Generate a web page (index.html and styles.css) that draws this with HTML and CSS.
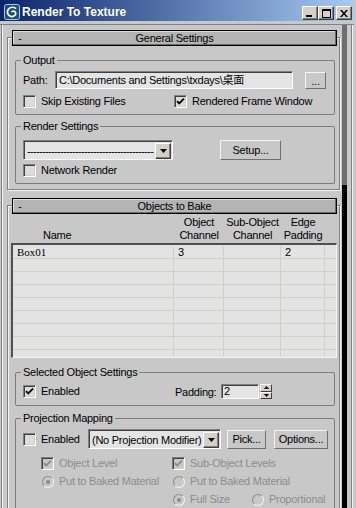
FILE: index.html
```html
<!DOCTYPE html>
<html>
  <head>
    <meta http-equiv="Content-Type" content="text/html; charset=UTF-8" />
    <title>Render To Texture</title>
    <link rel="stylesheet" href="styles.css">
  </head>
  <body>
    <div class="window">
      <div class="titlebar">
        <svg class="app-icon" width="16" height="16" viewBox="0 0 16 16">
          <rect x="0.5" y="0.5" width="15" height="15" rx="2" fill="#1d4f7c" stroke="#a9c6e2" />
          <path d="M12 4.6C10.4 2.8 6.2 2.6 4.3 5.2 2.4 7.8 3.6 11.6 6.8 12.4 9.6 13.1 12.2 11 11.6 8.7 11.1 6.8 8.4 6.6 7.5 8.2" fill="none" stroke="#fff" stroke-width="1.7" />
        </svg>
        <span class="title">Render To Texture</span>
        <div class="caption-buttons">
          <span class="cap-btn"><svg width="6" height="2"><rect width="6" height="2" /></svg></span>
          <span class="cap-btn"><svg width="9" height="9"><path d="M0.5 1.5h8v7h-8z" fill="none" stroke="#000" /><rect width="9" height="2" /></svg></span>
          <span class="cap-btn close"><svg width="8" height="7"><path d="M0 0h2l2 2.4 2-2.4h2l-3 3.5 3 3.5h-2l-2-2.4-2 2.4h-2l3-3.5z" /></svg></span>
        </div>
      </div>

      <div class="client">
        <div class="panel">
          <!-- General Settings -->
          <div class="rollout">
            <div class="rollout-head">
              <span class="sign">-</span>
              <span class="rollout-title">General Settings</span>
              <span></span>
            </div>

            <fieldset class="group">
              <legend>Output</legend>
              <div class="group-body">
                <div class="row path-row">
                  <span class="path-label">Path:</span>
                  <div class="field path-field">C:\Documents and Settings\txdays\桌面</div>
                  <span class="btn browse">...</span>
                </div>
                <div class="row check-row">
                  <span class="check col-left"><span class="cb"></span>Skip Existing Files</span>
                  <span class="check"><span class="cb"><svg width="9" height="9"><path d="M1 4.2l2.2 2.2 4.8-4.8" /></svg></span>Rendered Frame Window</span>
                </div>
              </div>
            </fieldset>

            <fieldset class="group render-group">
              <legend>Render Settings</legend>
              <div class="group-body">
                <div class="row combo-row">
                  <div class="combo preset">
                    <span class="combo-text dashes">------------------------------------------</span>
                    <span class="combo-arrow"><svg width="7" height="4"><path d="M0 0h7l-3.5 4z" /></svg></span>
                  </div>
                  <span class="btn setup">Setup...</span>
                </div>
                <div class="row check-row network">
                  <span class="check"><span class="cb"></span>Network Render</span>
                </div>
              </div>
            </fieldset>
          </div>

          <!-- Objects to Bake -->
          <div class="rollout bake">
            <div class="rollout-head">
              <span class="sign">-</span>
              <span class="rollout-title">Objects to Bake</span>
              <span></span>
            </div>

            <div class="col-heads">
              <span class="col-name">Name</span>
              <span>Object<br>Channel</span>
              <span>Sub-Object<br>Channel</span>
              <span>Edge<br>Padding</span>
              <span></span>
            </div>
            <div class="list">
              <div class="list-row"><span class="name-cell">Box01</span><span>3</span><span></span><span>2</span><span></span></div>
              <div class="list-row"><span></span><span></span><span></span><span></span><span></span></div>
              <div class="list-row"><span></span><span></span><span></span><span></span><span></span></div>
              <div class="list-row"><span></span><span></span><span></span><span></span><span></span></div>
              <div class="list-row"><span></span><span></span><span></span><span></span><span></span></div>
              <div class="list-row"><span></span><span></span><span></span><span></span><span></span></div>
              <div class="list-row"><span></span><span></span><span></span><span></span><span></span></div>
              <div class="list-row"><span></span><span></span><span></span><span></span><span></span></div>
              <div class="list-row"><span></span><span></span><span></span><span></span><span></span></div>
            </div>

            <fieldset class="group selected-group">
              <legend>Selected Object Settings</legend>
              <div class="group-body">
                <div class="row spin-row">
                  <span class="check col-left"><span class="cb"><svg width="9" height="9"><path d="M1 4.2l2.2 2.2 4.8-4.8" /></svg></span>Enabled</span>
                  <span class="spin-label">Padding:</span>
                  <div class="field spin-field">2</div>
                  <div class="spinner">
                    <span class="spin-btn"><svg width="5" height="3"><path d="M2.5 0l2.5 3h-5z" /></svg></span>
                    <span class="spin-btn"><svg width="5" height="3"><path d="M0 0h5l-2.5 3z" /></svg></span>
                  </div>
                </div>
              </div>
            </fieldset>

            <fieldset class="group projection-group">
              <legend>Projection Mapping</legend>
              <div class="group-body">
                <div class="row proj-row">
                  <span class="check proj-enabled"><span class="cb"></span>Enabled</span>
                  <div class="combo modifier">
                    <span class="combo-text">(No Projection Modifier)</span>
                    <span class="combo-arrow"><svg width="7" height="4"><path d="M0 0h7l-3.5 4z" /></svg></span>
                  </div>
                  <span class="btn pick">Pick...</span>
                  <span class="btn options">Options...</span>
                </div>
                <div class="row sub-row disabled">
                  <span class="check sub-left"><span class="cb off"><svg width="9" height="9"><path d="M1 4.2l2.2 2.2 4.8-4.8" /></svg></span>Object Level</span>
                  <span class="check"><span class="cb off"><svg width="9" height="9"><path d="M1 4.2l2.2 2.2 4.8-4.8" /></svg></span>Sub-Object Levels</span>
                </div>
                <div class="row sub-row disabled">
                  <span class="check sub-left"><span class="radio on"></span>Put to Baked Material</span>
                  <span class="check"><span class="radio"></span>Put to Baked Material</span>
                </div>
                <div class="row sub-row disabled">
                  <span class="sub-left"></span>
                  <span class="check full-size"><span class="radio on"></span>Full Size</span>
                  <span class="check"><span class="radio"></span>Proportional</span>
                </div>
              </div>
            </fieldset>
          </div>
        </div>

        <div class="scrollbar">
          <div class="scroll-track"></div>
          <div class="scroll-thumb"></div>
        </div>
        <div class="edge"></div>
      </div>
    </div>
  </body>
</html>
```

FILE: styles.css
```css
body {
  margin: 0;
  background-color: #c8c8c8;
  font-family: "Liberation Sans", "Noto Sans CJK SC", sans-serif;
  font-size: 11px;
  letter-spacing: -0.25px;
  color: #000;
  overflow: hidden;
}
.window {
  width: 354px;
  height: 508px;
  overflow: hidden;
}

/* title bar */
.titlebar {
  height: 21px;
  box-sizing: border-box;
  padding: 4px 2px 0 4px;
  display: flex;
  align-items: flex-start;
  background: linear-gradient(to right, #0a246a, #a6caf0);
}
.app-icon {
  flex: none;
}
.title {
  margin-left: 2px;
  color: #fff;
  font-weight: bold;
  font-size: 12px;
  line-height: 16px;
  letter-spacing: 0;
}
.caption-buttons {
  margin-left: auto;
  margin-top: 2px;
  display: flex;
}
.cap-btn {
  width: 16px;
  height: 14px;
  box-sizing: border-box;
  display: flex;
  align-items: center;
  justify-content: center;
  background: #d4d0c8;
  border: 1px solid;
  border-color: #fff #404040 #404040 #fff;
  box-shadow: inset -1px -1px 0 #808080;
}
.cap-btn:first-child svg {
  margin-top: 6px;
  margin-right: 2px;
}
.cap-btn.close {
  margin-left: 2px;
}

/* client area */
.client {
  display: flex;
  margin-top: 3px;
  height: 484px;
  border-top: 1px solid #808080;
}
.panel {
  width: 334px;
  margin-left: 1px;
  padding: 12px 0 0 5px;
  border-left: 1px solid #808080;
  box-shadow: inset 1px 0 0 #f4f4f4;
  overflow: hidden;
}
.scrollbar {
  width: 5px;
  margin-left: 1px;
  display: flex;
  flex-direction: column;
}
.scroll-track {
  height: 160px;
  background: #6e6e6e;
}
.scroll-thumb {
  flex: 1;
  background: #000;
}
.edge {
  width: 4px;
  border-right: 1px solid #808080;
  box-shadow: 1px 0 0 #f4f4f4;
}

/* rollouts */
.rollout {
  width: 333px;
  box-sizing: border-box;
  border: 1px solid #808080;
  box-shadow: 1px 1px 0 #f4f4f4, inset 1px 1px 0 #f4f4f4;
  padding-bottom: 5px;
}
.rollout.bake {
  margin-top: 15px;
}
.rollout-head {
  margin: -8px 2px 0 4px;
  height: 16px;
  box-sizing: border-box;
  border: 1px solid #000;
  background: #b4b4b4;
  box-shadow: inset -1px -1px 0 #6a6a6a, inset 1px 1px 0 #dcdcdc;
  display: grid;
  grid-template-columns: 1fr auto 1fr;
  align-items: center;
  line-height: 14px;
}
.sign {
  padding-left: 5px;
}

/* group boxes */
.group {
  margin: 0 0 0 7px;
  padding: 0;
  width: 320px;
  box-sizing: border-box;
  border: 1px solid #7c7c7c;
  border-radius: 2px;
  min-width: 0;
}
.group legend {
  margin-left: 5px;
  padding: 0 2px;
  line-height: 13px;
}
.rollout-head + .group {
  margin-top: 8px;
}
.render-group {
  margin-top: 5px;
}
.group-body {
  padding: 4px 0 6px 7px;
}
.render-group .group-body {
  padding-top: 7px;
}
.row {
  display: flex;
  align-items: center;
}
.check {
  display: flex;
  align-items: center;
  line-height: 13px;
  white-space: nowrap;
}
.col-left {
  width: 151px;
}

/* checkbox and radio */
.cb {
  width: 13px;
  height: 13px;
  box-sizing: border-box;
  margin-right: 5px;
  flex: none;
  display: flex;
  align-items: center;
  justify-content: center;
  background: #dcdcdc;
  border: 1px solid;
  border-color: #808080 #fff #fff #808080;
  box-shadow: inset 1px 1px 0 #404040, inset -1px -1px 0 #d4d0c8;
}
.cb path {
  fill: none;
  stroke: #000;
  stroke-width: 1.8;
}
.cb.off {
  background: #c8c8c8;
}
.cb.off path {
  stroke: #8a8a8a;
}
.radio {
  width: 12px;
  height: 12px;
  box-sizing: border-box;
  margin: 0 5px 0 1px;
  flex: none;
  border-radius: 50%;
  border: 1px solid;
  border-color: #8c8c8c #f4f4f4 #f4f4f4 #8c8c8c;
  background: #c8c8c8;
  display: flex;
  align-items: center;
  justify-content: center;
}
.radio.on::after {
  content: "";
  width: 4px;
  height: 4px;
  border-radius: 50%;
  background: #8a8a8a;
}

/* fields and buttons */
.field {
  box-sizing: border-box;
  border: 1px solid;
  border-color: #808080 #fff #fff #808080;
  box-shadow: inset 1px 1px 0 #404040;
  background: #e4e4e4;
  white-space: nowrap;
  overflow: hidden;
}
.path-row {
  height: 18px;
}
.path-label {
  width: 32px;
}
.path-field {
  width: 238px;
  height: 18px;
  line-height: 16px;
  padding-left: 3px;
}
.btn {
  box-sizing: border-box;
  display: flex;
  align-items: center;
  justify-content: center;
  background: #c8c8c8;
  border: 1px solid;
  border-color: #f4f4f4 #707070 #707070 #f4f4f4;
  white-space: nowrap;
}
.browse {
  width: 21px;
  height: 17px;
  margin-left: 12px;
  margin-top: 1px;
}
.check-row {
  margin-top: 6px;
  height: 13px;
}
.network {
  margin-top: 4px;
}

/* combo boxes */
.combo-row {
  height: 20px;
}
.combo {
  height: 20px;
  box-sizing: border-box;
  display: flex;
  align-items: center;
  border: 1px solid;
  border-color: #808080 #fff #fff #808080;
  box-shadow: inset 1px 1px 0 #404040;
  background: #e4e4e4;
  padding: 1px 1px 0 1px;
}
.combo-text {
  flex: 1;
  overflow: hidden;
  white-space: nowrap;
  padding-left: 2px;
}
.dashes {
  letter-spacing: -0.66px;
}
.combo-arrow {
  width: 16px;
  height: 16px;
  box-sizing: border-box;
  flex: none;
  display: flex;
  align-items: center;
  justify-content: center;
  background: #d4d0c8;
  border: 1px solid;
  border-color: #fff #404040 #404040 #fff;
  box-shadow: inset -1px -1px 0 #808080;
}
.preset {
  width: 150px;
}
.setup {
  width: 61px;
  height: 20px;
  margin-left: 47px;
  margin-top: -1px;
}

/* bake list */
.col-heads {
  margin: 2px 0 1px 3px;
  width: 326px;
  box-sizing: border-box;
  padding-left: 2px;
  display: grid;
  grid-template-columns: 161px 50px 57px 44px 11px;
  align-items: end;
  line-height: 13px;
  text-align: center;
  white-space: nowrap;
}
.col-name {
  text-align: left;
  padding-left: 30px;
}
.list {
  margin-left: 3px;
  width: 326px;
  height: 115px;
  box-sizing: border-box;
  border-style: solid;
  border-width: 2px 1px 1px 2px;
  border-color: #505050 #f4f4f4 #f4f4f4 #505050;
  background: #e3e3e3;
  padding-top: 1px;
  overflow: hidden;
}
.list-row {
  display: grid;
  grid-template-columns: 161px 50px 57px 44px 11px;
  height: 13px;
  box-sizing: border-box;
  border-bottom: 1px solid #d0d0c8;
  line-height: 12px;
}
.list-row span {
  border-right: 1px solid #d0d0c8;
  padding-left: 4px;
}
.list-row span:last-child {
  border-right: none;
}
.name-cell {
  font-family: "Liberation Serif", serif;
  letter-spacing: 0;
}

/* selected object settings */
.selected-group {
  margin-top: 8px;
}
.selected-group .group-body {
  padding-top: 5px;
}
.spin-row {
  height: 15px;
}
.spin-label {
  width: 46px;
  margin-left: 1px;
}
.spin-field {
  width: 38px;
  height: 15px;
  line-height: 13px;
  padding-left: 2px;
}
.spinner {
  width: 12px;
  height: 15px;
  margin-left: 1px;
  display: flex;
  flex-direction: column;
}
.spin-btn {
  flex: 1;
  display: flex;
  align-items: center;
  justify-content: center;
  background: #d4d0c8;
  border: 1px solid;
  border-color: #fff #404040 #404040 #fff;
}

/* projection mapping */
.projection-group {
  margin-top: 6px;
}
.proj-row {
  height: 20px;
}
.proj-enabled {
  width: 65px;
}
.modifier {
  width: 133px;
}
.pick {
  width: 39px;
  height: 19px;
  margin-left: 6px;
}
.options {
  width: 54px;
  height: 19px;
  margin-left: 8px;
}
.sub-row {
  margin-top: 5px;
  height: 13px;
  padding-left: 18px;
}
.proj-row + .sub-row {
  margin-top: 8px;
}
.sub-left {
  width: 131px;
}
.full-size {
  width: 79px;
}
.disabled {
  color: #8c8c8c;
}
```
